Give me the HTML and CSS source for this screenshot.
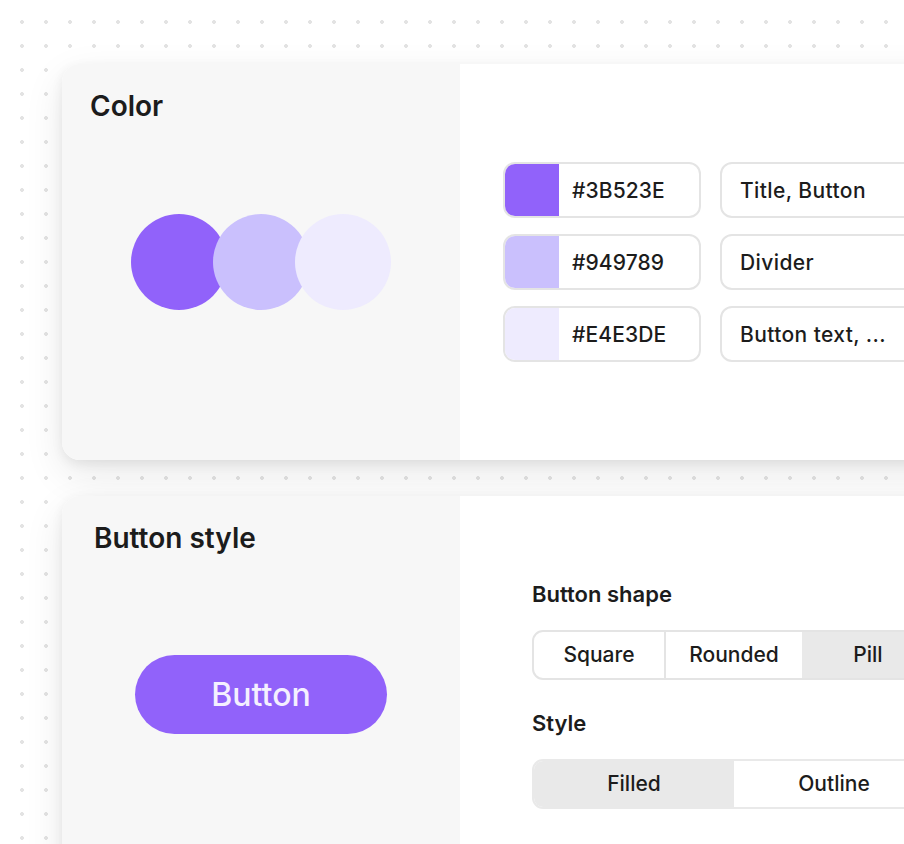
FILE: index.html
```html
<!DOCTYPE html>
<html lang="en">
<head>
<meta charset="utf-8">
<title>Theme settings</title>
<link rel="stylesheet" href="styles.css">
</head>
<body>
<main class="stage">
  <section class="card">
    <div class="card-left">
      <h2 class="card-title">Color</h2>
      <div class="circles">
        <span class="circle c1"></span>
        <span class="circle c2"></span>
        <span class="circle c3"></span>
      </div>
    </div>
    <div class="card-right colors-panel">
      <div class="color-row">
        <div class="hex-box"><span class="chip c1"></span><span class="hex">#3B523E</span></div>
        <div class="usage-box">Title, Button</div>
      </div>
      <div class="color-row">
        <div class="hex-box"><span class="chip c2"></span><span class="hex">#949789</span></div>
        <div class="usage-box">Divider</div>
      </div>
      <div class="color-row">
        <div class="hex-box"><span class="chip c3"></span><span class="hex">#E4E3DE</span></div>
        <div class="usage-box">Button text, ...</div>
      </div>
    </div>
  </section>

  <section class="card">
    <div class="card-left">
      <h2 class="card-title title-button">Button style</h2>
      <div class="preview">
        <button class="preview-btn" type="button">Button</button>
      </div>
    </div>
    <div class="card-right options-panel">
      <div class="option-group">
        <div class="option-label">Button shape</div>
        <div class="segmented shape">
          <span class="seg seg-square">Square</span>
          <span class="seg seg-rounded">Rounded</span>
          <span class="seg seg-pill active">Pill</span>
        </div>
      </div>
      <div class="option-group">
        <div class="option-label">Style</div>
        <div class="segmented style">
          <span class="seg seg-half active">Filled</span>
          <span class="seg seg-half">Outline</span>
        </div>
      </div>
    </div>
  </section>
</main>
</body>
</html>
```

FILE: styles.css
```css
* { box-sizing: border-box; }

html, body {
  margin: 0;
  height: 844px;
  overflow: hidden;
}

body {
  font-family: "Inter", "Noto Sans", sans-serif;
  color: #1c1c1c;
  background-color: #ffffff;
  background-image: radial-gradient(circle at center, #e3e3e3 1.6px, transparent 2.2px);
  background-size: 24px 24px;
  background-position: 10px 10px;
}

.stage {
  display: flex;
  flex-direction: column;
  gap: 36px;
  padding: 64px 0 0 62px;
}

.card {
  display: flex;
  width: 1000px;
  height: 396px;
  flex-shrink: 0;
  border-radius: 18px;
  overflow: hidden;
  background: #ffffff;
  box-shadow: 0 4px 12px rgba(0, 0, 0, 0.07), 0 14px 40px rgba(0, 0, 0, 0.09);
}

.card-left {
  width: 398px;
  flex-shrink: 0;
  background: #f7f7f7;
  display: grid;
  grid-template: 1fr / 1fr;
}

.card-left > * { grid-area: 1 / 1; }

.card-title {
  margin: 0;
  padding: 25px 0 0 28px;
  align-self: start;
  font-size: 28px;
  line-height: 34px;
  font-weight: 600;
}

.title-button { padding-left: 32px; }

.circles {
  place-self: center;
  display: flex;
}

.circle {
  width: 96px;
  height: 96px;
  border-radius: 50%;
}

.circle + .circle { margin-left: -14px; }

.c1 { background: #9162fa; }
.c2 { background: #cac0fd; }
.c3 { background: #eeebfe; }

.card-right {
  flex: 1;
  background: #ffffff;
  display: flex;
  flex-direction: column;
  justify-content: center;
}

.colors-panel {
  padding-left: 43px;
  gap: 16px;
}

.color-row {
  display: flex;
  gap: 19px;
}

.hex-box, .usage-box {
  height: 56px;
  border: 2px solid #e4e4e4;
  border-radius: 12px;
  background: #ffffff;
  font-size: 21px;
  font-weight: 500;
  letter-spacing: 0.1px;
  display: flex;
  align-items: center;
}

.hex-box {
  width: 198px;
  overflow: hidden;
}

.chip {
  width: 54px;
  height: 100%;
  flex-shrink: 0;
}

.hex { padding-left: 13px; }

.usage-box {
  width: 280px;
  padding-left: 18px;
  letter-spacing: 0.4px;
}

.preview {
  place-self: center;
}

.preview-btn {
  width: 252px;
  height: 79px;
  border: 0;
  border-radius: 40px;
  background: #9162fa;
  color: #f4f0ff;
  font-family: inherit;
  font-size: 32px;
  font-weight: 500;
  padding: 0;
}

.options-panel {
  padding: 2px 0 0 72px;
  gap: 31px;
}

.option-label {
  font-size: 22px;
  line-height: 24px;
  font-weight: 600;
  margin-bottom: 24px;
}

.segmented {
  display: flex;
  width: 404px;
  height: 50px;
  border: 2px solid #e4e4e4;
  border-radius: 11px;
  overflow: hidden;
  background: #ffffff;
}

.segmented.style { border-color: #e9e9e9; }

.seg {
  display: flex;
  align-items: center;
  justify-content: center;
  font-size: 21px;
  font-weight: 500;
}

.seg-square { width: 132px; border-right: 2px solid #e4e4e4; }
.seg-rounded { width: 136px; }
.seg-pill { flex: 1; }
.seg-half { flex: 1; }

.seg.active { background: #e9e9e9; }
```
